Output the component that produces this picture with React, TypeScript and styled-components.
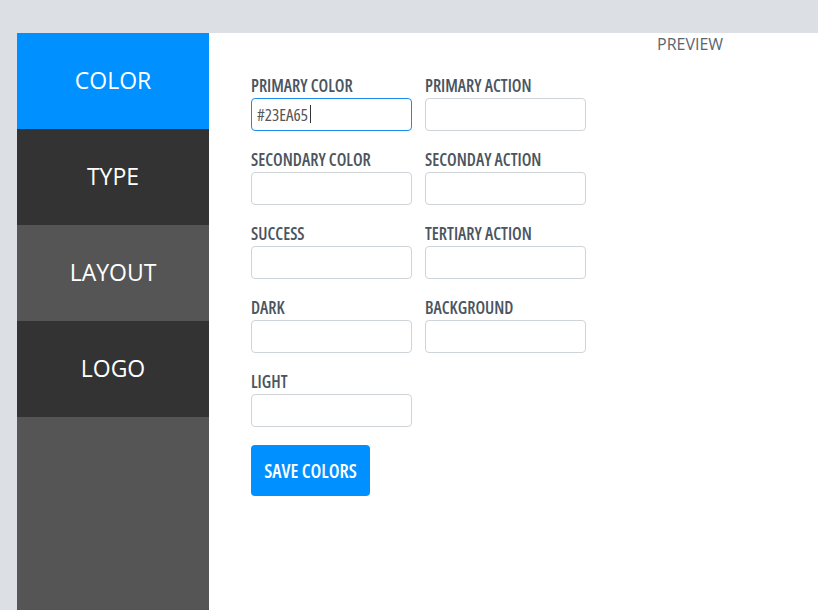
import React, { useState } from "react";
import styled, { createGlobalStyle } from "styled-components";

const GlobalStyle = createGlobalStyle`
    html, body {
        margin: 0;
        padding: 0;
        height: 100%;
        background: #dce0e4;
        overflow: hidden;
    }
    #root {
        height: 100%;
    }
`;

const menu = ["COLOR", "TYPE", "LAYOUT", "LOGO"];

const leftFields = [
    { label: "PRIMARY COLOR", value: "#23EA65" },
    { label: "SECONDARY COLOR", value: "" },
    { label: "SUCCESS", value: "" },
    { label: "DARK", value: "" },
    { label: "LIGHT", value: "" },
];

const rightFields = [
    { label: "PRIMARY ACTION", value: "" },
    { label: "SECONDAY ACTION", value: "" },
    { label: "TERTIARY ACTION", value: "" },
    { label: "BACKGROUND", value: "" },
];

const App = () => {
    const [active, setActive] = useState(0);
    const rows = leftFields.map((f, i) => [f, rightFields[i]]);

    return (
        <>
            <GlobalStyle />
            <Page>
                <Sidebar>
                    {menu.map((m, i) => (
                        <MenuItem
                            key={m}
                            $active={active === i}
                            $odd={i % 2 === 1}
                            onClick={() => setActive(i)}
                        >
                            {m}
                        </MenuItem>
                    ))}
                </Sidebar>
                <Main>
                    <Form>
                        {rows.map(([l, r], i) => (
                            <Row key={i}>
                                <Field>
                                    <Label>{l.label}</Label>
                                    <Input
                                        defaultValue={l.value}
                                        $focused={i === 0}
                                    />
                                    {i === 0 && <Caret />}
                                </Field>
                                {r && (
                                    <Field>
                                        <Label>{r.label}</Label>
                                        <Input defaultValue={r.value} />
                                    </Field>
                                )}
                            </Row>
                        ))}
                        <SaveButton>SAVE COLORS</SaveButton>
                    </Form>
                    <Preview>PREVIEW</Preview>
                </Main>
            </Page>
        </>
    );
};

export default App;

const Page = styled.div`
    display: flex;
    height: 100%;
    box-sizing: border-box;
    padding: 33px 0 0 17px;
`;

const Sidebar = styled.nav`
    width: 192px;
    flex-shrink: 0;
    background: #555555;
    display: flex;
    flex-direction: column;
`;

const MenuItem = styled.div<{ $active: boolean; $odd: boolean }>`
    height: 96px;
    display: flex;
    align-items: center;
    justify-content: center;
    padding-bottom: 2px;
    box-sizing: border-box;
    font-family: "Open Sans", "Noto Sans", sans-serif;
    font-size: 23px;
    color: #ffffff;
    cursor: pointer;
    background: ${(p) =>
        p.$active ? "#0090ff" : p.$odd ? "#333333" : "#555555"};
`;

const Main = styled.main`
    flex: 1;
    background: #ffffff;
    display: flex;
    position: relative;
`;

const Form = styled.div`
    padding: 43px 0 0 42px;
    display: flex;
    flex-direction: column;
`;

const Row = styled.div`
    display: flex;
    gap: 13px;
    margin-bottom: 19px;
`;

const Field = styled.div`
    position: relative;
    display: flex;
    flex-direction: column;
    width: 161px;
`;

const Label = styled.label`
    font-family: "Open Sans", sans-serif;
    font-stretch: 75%;
    font-weight: 600;
    font-size: 17px;
    line-height: 20px;
    height: 20px;
    margin-bottom: 2px;
    color: #4a5560;
    white-space: nowrap;
`;

const Input = styled.input<{ $focused?: boolean }>`
    box-sizing: border-box;
    width: 161px;
    height: 33px;
    border: 1px solid ${(p) => (p.$focused ? "#1a8cf0" : "#cfd4d9")};
    border-radius: 4px;
    padding: 0 5px;
    font-family: "Open Sans", sans-serif;
    font-stretch: 75%;
    font-size: 17px;
    color: #555555;
    outline: none;
`;

const Caret = styled.span`
    position: absolute;
    left: 59px;
    top: 29px;
    width: 1px;
    height: 18px;
    background: #333;
`;

const SaveButton = styled.button`
    align-self: flex-start;
    margin-top: -1px;
    width: 119px;
    height: 51px;
    border: none;
    border-radius: 4px;
    background: #0090ff;
    color: #ffffff;
    font-family: "Open Sans", sans-serif;
    font-stretch: 75%;
    font-weight: 600;
    font-size: 19px;
    cursor: pointer;
`;

const Preview = styled.div`
    margin-left: 71px;
    padding-top: 0;
    font-family: "Open Sans", sans-serif;
    font-size: 16px;
    color: #5a6570;
`;
